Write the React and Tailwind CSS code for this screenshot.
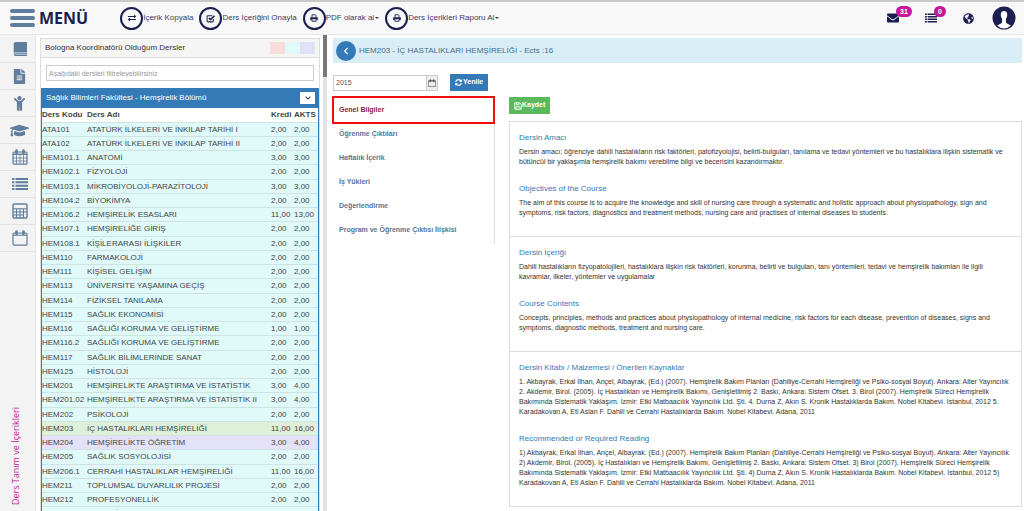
/**
 * App.jsx - Course definition and contents screen
 *
 * Displays:
 * - Top bar with the course actions and user shortcuts
 * - Icon rail
 * - Filterable list of the coordinator's courses
 * - Detail pane of the selected course
 */

import React, { useState } from 'react';
import {
    FaFileAlt, FaChild, FaGraduationCap, FaExchangeAlt,
    FaEnvelope, FaGlobeAmericas, FaChevronLeft, FaChevronDown, FaSyncAlt
} from 'react-icons/fa';

const COURSES = [
    ['ATA101', 'ATATÜRK İLKELERİ VE İNKILAP TARİHİ I', '2,00', '2,00'],
    ['ATA102', 'ATATÜRK İLKELERİ VE İNKILAP TARİHİ II', '2,00', '2,00'],
    ['HEM101.1', 'ANATOMİ', '3,00', '3,00'],
    ['HEM102.1', 'FİZYOLOJİ', '2,00', '2,00'],
    ['HEM103.1', 'MİKROBİYOLOJİ-PARAZİTOLOJİ', '3,00', '3,00'],
    ['HEM104.2', 'BİYOKİMYA', '2,00', '2,00'],
    ['HEM106.2', 'HEMŞİRELİK ESASLARI', '11,00', '13,00'],
    ['HEM107.1', 'HEMŞİRELİĞE GİRİŞ', '2,00', '2,00'],
    ['HEM108.1', 'KİŞİLERARASI İLİŞKİLER', '2,00', '2,00'],
    ['HEM110', 'FARMAKOLOJİ', '2,00', '2,00'],
    ['HEM111', 'KİŞİSEL GELİŞİM', '2,00', '2,00'],
    ['HEM113', 'ÜNİVERSİTE YAŞAMINA GEÇİŞ', '2,00', '2,00'],
    ['HEM114', 'FİZİKSEL TANILAMA', '2,00', '2,00'],
    ['HEM115', 'SAĞLIK EKONOMİSİ', '2,00', '2,00'],
    ['HEM116', 'SAĞLIĞI KORUMA VE GELİŞTİRME', '1,00', '1,00'],
    ['HEM116.2', 'SAĞLIĞI KORUMA VE GELİŞTİRME', '2,00', '2,00'],
    ['HEM117', 'SAĞLIK BİLİMLERİNDE SANAT', '2,00', '2,00'],
    ['HEM125', 'HİSTOLOJİ', '2,00', '2,00'],
    ['HEM201', 'HEMŞİRELİKTE ARAŞTIRMA VE İSTATİSTİK', '3,00', '4,00'],
    ['HEM201.02', 'HEMŞİRELİKTE ARAŞTIRMA VE İSTATİSTİK II', '3,00', '4,00'],
    ['HEM202', 'PSİKOLOJİ', '2,00', '2,00'],
    ['HEM203', 'İÇ HASTALIKLARI HEMŞİRELİĞİ', '11,00', '16,00'],
    ['HEM204', 'HEMŞİRELİKTE ÖĞRETİM', '3,00', '4,00'],
    ['HEM205', 'SAĞLIK SOSYOLOJİSİ', '2,00', '2,00'],
    ['HEM206.1', 'CERRAHİ HASTALIKLAR HEMŞİRELİĞİ', '11,00', '16,00'],
    ['HEM211', 'TOPLUMSAL DUYARLILIK PROJESİ', '2,00', '2,00'],
    ['HEM212', 'PROFESYONELLİK', '2,00', '2,00'],
    ['HEM213', 'TEMEL İLK YARDIM UYGULAMALARI', '2,00', '2,00']
];

const ROW_COLORS = {
    HEM203: 'bg-[#dff0d8]',
    HEM204: 'bg-[#e4e2f8]'
};

const TABS = [
    'Genel Bilgiler',
    'Öğrenme Çıktıları',
    'Haftalık İçerik',
    'İş Yükleri',
    'Değerlendirme',
    'Program ve Öğrenme Çıktısı İlişkisi'
];

const SECTIONS = [
    [
        {
            title: 'Dersin Amacı',
            text: 'Dersin amacı; öğrenciye dahili hastalıkların risk faktörleri, patofizyolojisi, belirti-bulguları, tanılama ve tedavi yöntemleri ve bu hastalıklara ilişkin sistematik ve bütüncül bir yaklaşımla hemşirelik bakımı verebilme bilgi ve becerisini kazandırmaktır.'
        },
        {
            title: 'Objectives of the Course',
            text: 'The aim of this course is to acquire the knowledge and skill of nursing care through a systematic and holistic approach about physiopathology, sign and symptoms, risk factors, diagnostics and treatment methods, nursing care and practises of internal diseases to students.'
        }
    ],
    [
        {
            title: 'Dersin İçeriği',
            text: 'Dahili hastalıkların fizyopatolojileri, hastalıklara ilişkin risk faktörleri, korunma, belirti ve bulguları, tanı yöntemleri, tedavi ve hemşirelik bakımları ile ilgili kavramlar, ilkeler, yöntemler ve uygulamalar'
        },
        {
            title: 'Course Contents',
            text: 'Concepts, principles, methods and practices about physiopathology of internal medicine, risk factors for each disease, prevention of diseases, signs and symptoms, diagnostic methods, treatment and nursing care.'
        }
    ],
    [
        {
            title: 'Dersin Kitabı / Malzemesi / Önerilen Kaynaklar',
            text: '1. Akbayrak, Erkal İlhan, Ançel, Albayrak, (Ed.) (2007). Hemşirelik Bakım Planları (Dahiliye-Cerrahi Hemşireliği ve Psiko-sosyal Boyut). Ankara: Alter Yayıncılık 2. Akdemir, Birol. (2005). İç Hastalıkları ve Hemşirelik Bakımı, Genişletilmiş 2. Baskı, Ankara: Sistem Ofset. 3. Birol (2007). Hemşirelik Süreci Hemşirelik Bakımında Sistematik Yaklaşım. İzmir: Etki Matbaacılık Yayıncılık Ltd. Şti. 4. Durna Z, Akın S. Kronik Hastalıklarda Bakım. Nobel Kitabevi. İstanbul, 2012 5. Karadakovan A, Eti Aslan F. Dahili ve Cerrahi Hastalıklarda Bakım. Nobel Kitabevi. Adana, 2011'
        },
        {
            title: 'Recommended or Required Reading',
            text: '1) Akbayrak, Erkal İlhan, Ançel, Albayrak. (Ed.) (2007). Hemşirelik Bakım Planları (Dahiliye-Cerrahi Hemşireliği ve Psiko-sosyal Boyut). Ankara: Alter Yayıncılık 2) Akdemir, Birol. (2005). İç Hastalıkları ve Hemşirelik Bakımı, Genişletilmiş 2. Baskı, Ankara: Sistem Ofset. 3) Birol (2007). Hemşirelik Süreci Hemşirelik Bakımında Sistematik Yaklaşım. İzmir: Etki Matbaacılık Yayıncılık Ltd. Şti. 4) Durna Z, Akın S. Kronik Hastalıklarda Bakım. Nobel Kitabevi. İstanbul, 2012 5) Karadakovan A, Eti Aslan F. Dahili ve Cerrahi Hastalıklarda Bakım. Nobel Kitabevi. Adana, 2011'
        }
    ]
];

/**
 * Outline calendar, with or without the day grid
 */
const CalendarIcon = ({ size = 16, grid = false }) => (
    <svg width={size} height={size} viewBox="0 0 16 16" fill="none" stroke="currentColor" aria-hidden="true">
        <rect x="1" y="3" width="14" height="12.200" rx="1" strokeWidth="1.2" />
        <path d="M1 5.200h14" strokeWidth={grid ? 1.400 : 1} />
        <path d="M4.500 1.600v2.400M11.500 1.600v2.400" strokeWidth="2.600" strokeLinecap="round" />
        {grid && <path d="M4.500 6v9M8 6v9M11.500 6v9M1 9h14M1 12h14" strokeWidth="0.800" />}
    </svg>
);

const CalculatorIcon = () => (
    <svg width="16" height="16" viewBox="0 0 16 16" fill="none" stroke="currentColor" aria-hidden="true">
        <rect x="1" y="1" width="14" height="14" rx="1" strokeWidth="1.4" />
        <path d="M1 5.800h14M1 9h14M1 12h10.500M4.500 5.800V15M8 5.800V15M11.500 5.800V15" strokeWidth="1.100" />
    </svg>
);

const BookIcon = () => (
    <svg width="16" height="16" viewBox="0 0 16 16" fill="currentColor" aria-hidden="true">
        <path d="M4 1h10.200c.5 0 .8.300.8.800V11.500H3.200c-.700 0-1.200.3-1.500.7V3.200C1.700 1.900 2.600 1 4 1z" />
        <path d="M3.400 12.200H14v.7H3.600c-.4 0-.4.500 0 .5H14.300V12H15v2.300c0 .4-.3.700-.7.700H3.500c-1 0-1.700-.6-1.700-1.400s.7-1.400 1.600-1.400z" />
    </svg>
);

const ListIcon = ({ size = 16 }) => (
    <svg width={size} height={size} viewBox="0 0 16 16" fill="currentColor" aria-hidden="true">
        <path d="M0 2h2.500v2H0zM0 5.300h2.500v2H0zM0 8.700h2.500v2H0zM0 12h2.500v2H0z" />
        <path d="M3.500 2H16v2H3.500zM3.500 5.300H16v2H3.500zM3.500 8.700H16v2H3.500zM3.500 12H16v2H3.500z" />
    </svg>
);

const PrinterIcon = () => (
    <svg width="8" height="8" viewBox="0 0 16 16" fill="none" stroke="currentColor" strokeWidth="1.800" aria-hidden="true">
        <path d="M4 7V1.500h6.500L12 3v4" />
        <path d="M1 7h14v5h-2v-2H3v2H1z" fill="currentColor" strokeWidth="1" />
        <path d="M4 11v3.500h8V11" />
    </svg>
);

const CheckIcon = () => (
    <svg width="9" height="9" viewBox="0 0 16 16" fill="none" stroke="currentColor" aria-hidden="true">
        <path d="M13 9v3.500c0 .9-.6 1.500-1.500 1.500h-8C2.600 14 2 13.400 2 12.500v-8C2 3.600 2.600 3 3.500 3h7.500" strokeWidth="1.800" />
        <path d="M5 7l3 3 7-7" strokeWidth="2.800" />
    </svg>
);

const SaveIcon = () => (
    <svg width="8" height="8" viewBox="0 0 16 16" fill="none" stroke="currentColor" strokeWidth="1.800" aria-hidden="true">
        <path d="M1.500 1.500h9.500l3.500 3.500v9.500h-13z" />
        <path d="M4.500 1.500v4h5.500v-4M4 14.500v-5h8v5" />
    </svg>
);

const UserIcon = () => (
    <svg width="24" height="24" viewBox="0 0 24 24" aria-hidden="true">
        <circle cx="12" cy="12" r="11.5" fill="#1b1f4f" />
        <path
            d="M12 5c-2.3 0-3.400 1.600-3.200 4 .1 1.800.6 3 1.300 3.800v3.400c-.5 1.600-3.100 1.900-5 3.300A10.500 10.500 0 0 0 12 22.500a10.500 10.500 0 0 0 6.900-3c-1.900-1.400-4.500-1.700-5-3.300v-3.400c.7-.8 1.200-2 1.300-3.800.2-2.400-.9-4-3.200-4z"
            fill="#ffffff"
        />
    </svg>
);

const RAIL_ITEMS = [
    { label: 'Dersler', icon: <BookIcon /> },
    { label: 'Belgeler', icon: <FaFileAlt size={15} /> },
    { label: 'Öğrenci', icon: <FaChild size={15} /> },
    { label: 'Mezuniyet', icon: <FaGraduationCap size={19} /> },
    { label: 'Takvim', icon: <CalendarIcon grid /> },
    { label: 'Liste', icon: <ListIcon /> },
    { label: 'Hesaplama', icon: <CalculatorIcon /> },
    { label: 'Program', icon: <CalendarIcon /> }
];

const TopAction = ({ icon, label, caret }) => (
    <button type="button" className="flex items-center whitespace-nowrap text-[#3d4163]">
        <span className="flex size-[23px] items-center justify-center rounded-full border-2 border-[#1b1f4f] text-[#1b1f4f]">
            {icon}
        </span>
        {label}
        {caret && <span className="ml-px size-0 border-x-2 border-t-2 border-x-transparent border-t-[#3d4163]" />}
    </button>
);

const Badge = ({ children }) => (
    <span className="absolute -top-[6px] left-[9px] rounded-full bg-[#c4189c] px-1 text-[7px] leading-[11px] font-bold text-white">
        {children}
    </span>
);

const TopBar = () => (
    <header className="flex h-[35px] shrink-0 items-center border-t-2 border-b border-t-[#c9c9c9] border-b-[#e7e7e7] bg-[#f8f8f8] pr-2 pl-[10px] text-[8px]">
        <button type="button" className="flex items-center gap-1 text-[#1b1f4f]">
            <span className="flex w-[25px] flex-col gap-[3px]">
                <span className="h-1 rounded-full bg-[#5f7d9c]" />
                <span className="h-1 rounded-full bg-[#5f7d9c]" />
                <span className="h-1 rounded-full bg-[#5f7d9c]" />
            </span>
            <span className="font-['Open_Sans',sans-serif] text-[16px] leading-5 font-bold">MENÜ</span>
        </button>
        <nav className="ml-8 flex items-center gap-[6px]">
            <TopAction icon={<FaExchangeAlt size={8} />} label="İçerik Kopyala" />
            <TopAction icon={<CheckIcon />} label="Ders İçeriğini Onayla" />
            <TopAction icon={<PrinterIcon />} label="PDF olarak al" caret />
            <TopAction icon={<PrinterIcon />} label="Ders İçerikleri Raporu Al" caret />
        </nav>
        <div className="ml-auto flex items-center text-[#1b1f4f]">
            <button type="button" aria-label="Mesajlar" className="relative mr-[26px]">
                <FaEnvelope size={12} />
                <Badge>31</Badge>
            </button>
            <button type="button" aria-label="Görevler" className="relative mr-[26px]">
                <ListIcon size={12} />
                <Badge>0</Badge>
            </button>
            <button type="button" aria-label="Dil" className="mr-[18px]">
                <FaGlobeAmericas size={11} />
            </button>
            <button type="button" aria-label="Kullanıcı">
                <UserIcon />
            </button>
        </div>
    </header>
);

const IconRail = () => (
    <aside className="flex w-9 shrink-0 flex-col border-r border-[#e7e7e7] bg-[#f3f3f3] pt-px">
        {RAIL_ITEMS.map(item => (
            <button
                key={item.label}
                type="button"
                aria-label={item.label}
                className="flex h-[27px] shrink-0 items-center justify-center border-b border-[#e2e2e2] pl-1 text-[#5f7d9c]"
            >
                {item.icon}
            </button>
        ))}
        <span className="mt-auto mb-[6px] ml-2 rotate-180 font-['Open_Sans',sans-serif] text-[9px] leading-4 text-[#c4189c] [writing-mode:vertical-rl]">
            Ders Tanım ve İçerikleri
        </span>
    </aside>
);

const CourseList = () => {
    const [filter, setFilter] = useState('');
    const rows = COURSES.filter(course => course.join(' ').includes(filter.toLocaleUpperCase('tr')));

    return (
        <section className="mt-[3px] ml-1 w-[280px] shrink-0 overflow-hidden border border-b-0 border-[#ddd]">
            <div className="flex h-[19px] items-center justify-between border-b border-[#ddd] bg-[#f5f5f5] px-1 text-[8px] text-[#333]">
                <h2>Bologna Koordinatörü Olduğum Dersler</h2>
                <div className="flex">
                    <span className="h-3 w-[15px] bg-[#fadcdc]" />
                    <span className="h-3 w-[15px] bg-[#e0fafa]" />
                    <span className="h-3 w-[15px] bg-[#e0e0f8]" />
                </div>
            </div>
            <div className="px-[5px] py-[7px]">
                <input
                    type="text"
                    aria-label="Ders filtresi"
                    placeholder="Aşağıdaki dersleri filtreleyebilirsiniz"
                    value={filter}
                    onChange={e => setFilter(e.target.value)}
                    className="block h-4 w-full border border-[#ccc] px-[2px] text-[7px] text-[#555] outline-none placeholder:text-[#999]"
                />
            </div>
            <div className="flex h-5 items-center justify-between bg-[#337ab7] pr-1 pl-[5px] text-[8px] text-white">
                <h3>Sağlık Bilimleri Fakültesi - Hemşirelik Bölümü</h3>
                <button type="button" aria-label="Daralt" className="flex h-3 w-[15px] items-center justify-center bg-white text-[#333]">
                    <FaChevronDown size={6} />
                </button>
            </div>
            <div className="border-x border-[#337ab7]">
                <table className="w-full table-fixed text-left text-[8px] leading-[13px] text-[#444]">
                    <thead>
                        <tr className="h-[14px]">
                            <th className="w-[44px] whitespace-nowrap">Ders Kodu</th>
                            <th className="pl-px">Ders Adı</th>
                            <th className="w-[23px] whitespace-nowrap">Kredi</th>
                            <th className="w-[24px] whitespace-nowrap">AKTS</th>
                        </tr>
                    </thead>
                    <tbody>
                        {rows.map(([code, name, credit, ects]) => (
                            <tr
                                key={code}
                                className={`h-[14px] border-t border-[#cfe3e3] nth-[4n]:h-[15px] ${ROW_COLORS[code] || 'bg-[#e0fafa]'}`}
                            >
                                <td>{code}</td>
                                <td className="truncate pl-px">{name}</td>
                                <td>{credit}</td>
                                <td>{ects}</td>
                            </tr>
                        ))}
                    </tbody>
                </table>
            </div>
        </section>
    );
};

const TabList = ({ active, onSelect }) => (
    <div role="tablist" className="flex w-[163px] shrink-0 flex-col text-[7px] font-bold">
        {TABS.map(tab => (
            <button
                key={tab}
                type="button"
                role="tab"
                aria-selected={tab === active}
                onClick={() => onSelect(tab)}
                className={tab === active
                    ? 'h-[28px] border-2 border-[#f00f0f] px-[5px] text-left text-[#8c1d3f]'
                    : 'h-6 border-r border-[#ddd] px-[7px] pb-1 text-left text-[#5b7394]'}
            >
                {tab}
            </button>
        ))}
    </div>
);

const CourseDetail = () => {
    const [tab, setTab] = useState(TABS[0]);

    return (
        <main className="min-w-0 flex-1 overflow-hidden pt-[3px] pr-[2px] pl-[5px]">
            <div className="ml-px flex h-[25px] items-center gap-[3px] bg-[#d9edf7] pl-[3px] text-[8px] text-[#4a6f8a]">
                <button type="button" aria-label="Geri" className="flex size-5 items-center justify-center rounded-full bg-[#337ab7] text-white">
                    <FaChevronLeft size={8} />
                </button>
                <h1>HEM203 - İÇ HASTALIKLARI HEMŞİRELİĞİ - Ects :16</h1>
            </div>
            <div className="mt-[11px] ml-px flex items-center text-[7px]">
                <input
                    type="text"
                    aria-label="Yıl"
                    defaultValue="2015"
                    className="h-4 w-[94px] border border-[#ccc] px-[2px] text-[#555] outline-none"
                />
                <button type="button" aria-label="Takvimi aç" className="flex h-4 w-[11px] items-center justify-center border border-l-0 border-[#ccc] bg-[#eee] text-[#444]">
                    <CalendarIcon size={8} />
                </button>
                <button type="button" className="ml-3 flex h-[17px] items-center gap-px bg-[#337ab7] px-[5px] font-bold text-white">
                    <FaSyncAlt size={7} />
                    Yenile
                </button>
            </div>
            <div className="mt-[5px] flex items-start">
                <TabList active={tab} onSelect={setTab} />
                <div className="ml-[14px] min-w-0 flex-1">
                    <button type="button" className="mt-px flex h-[17px] items-center bg-[#5cb85c] px-[5px] text-[7px] font-bold text-white">
                        <SaveIcon />
                        Kaydet
                    </button>
                    <div className="mt-[7px] border-x border-b border-[#ddd]">
                        {SECTIONS.map(blocks => (
                            <section key={blocks[0].title} className="flex flex-col gap-[15px] border-t border-[#ddd] px-[9px] pt-[10px] pb-[17px]">
                                {blocks.map(block => (
                                    <div key={block.title}>
                                        <h4 className="mb-[3px] text-[8px] leading-3 text-[#337ab7]">{block.title}</h4>
                                        <p className="mb-px text-[7px] leading-[10px] text-[#333]">{block.text}</p>
                                    </div>
                                ))}
                            </section>
                        ))}
                    </div>
                </div>
            </div>
        </main>
    );
};

const App = () => (
    <div className="flex h-screen flex-col overflow-hidden bg-white font-['Liberation_Sans',Arial,sans-serif]">
        <TopBar />
        <div className="flex min-h-0 flex-1">
            <IconRail />
            <CourseList />
            <div className="ml-[3px] w-1 shrink-0 bg-[#e3e3e3]">
                <div className="h-[42px] bg-[#777]" />
            </div>
            <CourseDetail />
        </div>
    </div>
);

export default App;
